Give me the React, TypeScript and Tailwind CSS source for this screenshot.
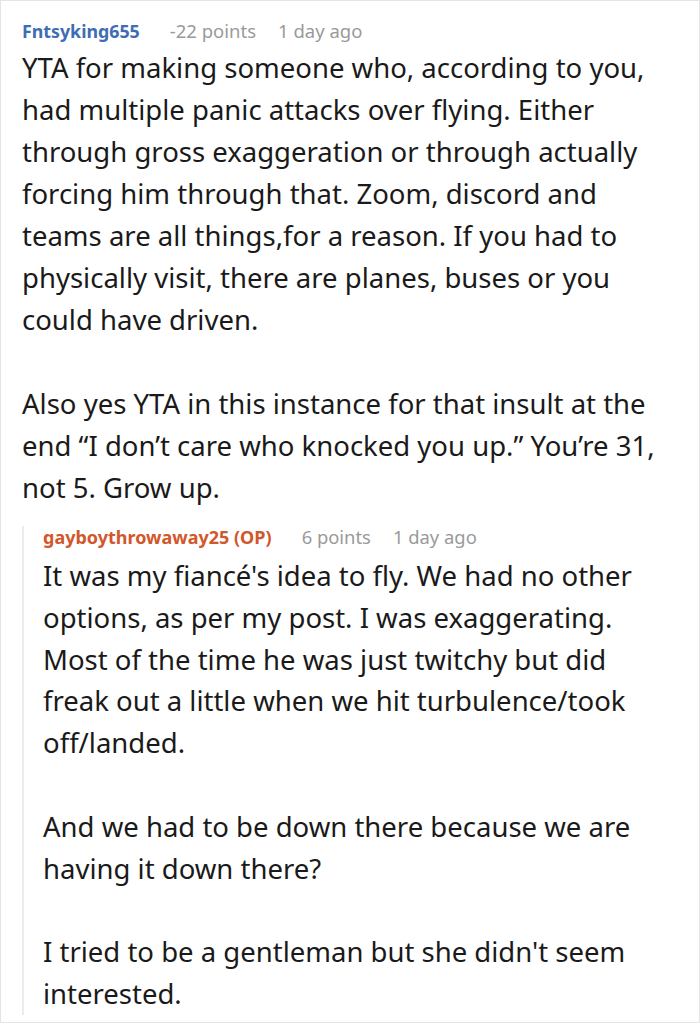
export default function App() {
  return (
    <div className="w-[700px] h-[1024px] bg-white" style={{ fontFamily: '"Noto Sans", "Open Sans", sans-serif' }}>
      <div className="h-[1023px] border border-[#e4e4e4] pt-[19px] pl-[21px] pr-[30px] overflow-hidden">
        <div className="flex items-center h-[22px] text-[18.5px] text-[#9a9a9a]">
          <span className="font-bold text-[#3e6db3] text-[17.8px]">Fntsyking655</span>
          <span className="ml-[30px]">-22 points</span>
          <span className="ml-[22px]">1 day ago</span>
        </div>
        <div className="mt-[5px] text-[27.5px] leading-[42px] text-[#1a1a1a]">
          <p>
            YTA for making someone who, according to you, had multiple panic attacks over flying. Either through
            gross exaggeration or through actually forcing him through that. Zoom, discord and teams are all
            things,for a reason. If you had to physically visit, there are planes, buses or you could have driven.
          </p>
          <p className="mt-[42px]">
            Also yes YTA in this instance for that insult at the end “I don’t care who knocked you up.” You’re 31,
            not 5. Grow up.
          </p>
        </div>
        <div className="mt-[17px] border-l-2 border-[#ececec] pl-[19px]">
          <div className="flex items-center h-[22px] text-[18.4px] text-[#9a9a9a]">
            <span className="font-bold text-[#d2572b] text-[18px]">gayboythrowaway25 (OP)</span>
            <span className="ml-[30px]">6 points</span>
            <span className="ml-[22px]">1 day ago</span>
          </div>
          <div className="mt-[7px] text-[27.5px] leading-[41.8px] text-[#1a1a1a]">
            <p>
              It was my fiancé's idea to fly. We had no other options, as per my post. I was exaggerating. Most of
              the time he was just twitchy but did freak out a little when we hit turbulence/took off/landed.
            </p>
            <p className="mt-[41.8px]">And we had to be down there because we are having it down there?</p>
            <p className="mt-[41.8px]">I tried to be a gentleman but she didn't seem interested.</p>
          </div>
        </div>
      </div>
    </div>
  );
}
